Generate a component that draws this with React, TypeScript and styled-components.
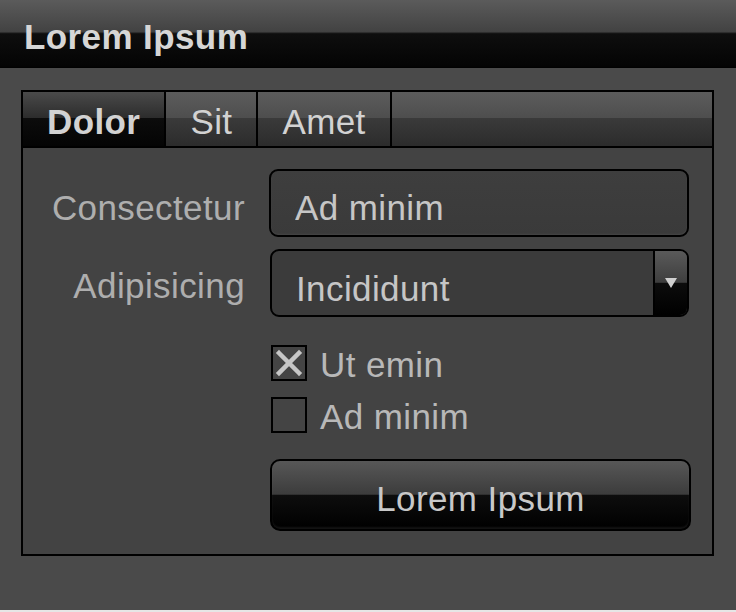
import React, { useState } from 'react'
import styled, { createGlobalStyle } from 'styled-components'

const GlobalStyle = createGlobalStyle`
  html, body {
    margin: 0;
    padding: 0;
    background: #e6e6e6;
  }
  * {
    box-sizing: border-box;
  }
`

const Window = styled.div`
  width: 736px;
  height: 610px;
  background-color: #4a4a4a;
  font-family: 'Liberation Sans', Arial, Helvetica, sans-serif;
  font-size: 35px;
  letter-spacing: 0.4px;
  color: #b4b4b4;
  overflow: hidden;
`

const TitleBar = styled.div`
  height: 68px;
  display: flex;
  align-items: center;
  padding: 5px 0 0 24px;
  background: linear-gradient(
    to bottom,
    #5b5b5b 0px,
    #424242 32px,
    #1a1a1a 33px,
    #0e0e0e 34px,
    #040404 66px,
    #000 68px
  );
`

const Title = styled.h1`
  margin: 0;
  font-size: 35px;
  font-weight: 700;
  color: #d6d6d6;
  line-height: 1;
`

const Body = styled.div`
  padding: 22px 22px 0 21px;
`

const TabPanel = styled.div`
  border: 2px solid #000;
  background-color: #434343;
`

const TabBar = styled.div`
  display: flex;
  height: 56px;
  border-bottom: 2px solid #000;
`

const Tab = styled.button<{ $active?: boolean }>`
  height: 100%;
  margin: 0;
  padding: 5px 24px 0;
  border: none;
  border-right: 2px solid #000;
  font-family: inherit;
  font-size: 35px;
  letter-spacing: 0.4px;
  font-weight: ${({ $active }) => ($active ? 700 : 400)};
  color: #d2d2d2;
  cursor: pointer;
  background: ${({ $active }) =>
    $active
      ? 'linear-gradient(to bottom, #4a4a4a 0%, #2c2c2c 48%, #0c0c0c 49%, #040404 100%)'
      : 'linear-gradient(to bottom, #5c5c5c 0%, #4e4e4e 48%, #3a3a3a 49%, #2c2c2c 100%)'};
`

const TabFiller = styled.div`
  flex: 1;
  background: linear-gradient(to bottom, #5c5c5c 0%, #4e4e4e 48%, #3a3a3a 49%, #2c2c2c 100%);
`

const Form = styled.div`
  display: grid;
  grid-template-columns: 222px 420px;
  column-gap: 24px;
  padding: 21px 0 23px;
`

const Label = styled.label<{ $mt?: number; $pt?: number }>`
  grid-column: 1;
  justify-self: end;
  align-self: center;
  margin-top: ${({ $mt }) => $mt || 0}px;
  padding-top: ${({ $pt }) => $pt || 0}px;
  color: #aeaeae;
`

const Field = styled.div<{ $mt?: number }>`
  grid-column: 2;
  margin-top: ${({ $mt }) => $mt || 0}px;
`

const TextInput = styled.input`
  display: block;
  width: 100%;
  height: 68px;
  padding: 10px 24px 0;
  border: 2px solid #000;
  border-radius: 9px;
  background: linear-gradient(to bottom, #3e3e3e, #3a3a3a);
  box-shadow: inset 0 -1px 2px rgba(255, 255, 255, 0.06);
  font-family: inherit;
  font-size: 35px;
  letter-spacing: 0.4px;
  color: #c6c6c6;
  outline: none;
`

const SelectBox = styled.div`
  display: flex;
  height: 68px;
  margin-left: 1px;
  border: 2px solid #000;
  border-radius: 9px;
  overflow: hidden;
  background: #3b3b3b;
`

const SelectValue = styled.div`
  flex: 1;
  display: flex;
  align-items: center;
  padding: 12px 24px 0;
  color: #c6c6c6;
`

const SelectArrow = styled.div`
  width: 34px;
  display: flex;
  align-items: center;
  justify-content: center;
  border-left: 2px solid #000;
  background: linear-gradient(to bottom, #5a5a5a 0%, #3e3e3e 49%, #0c0c0c 50%, #000 100%);
`

const CheckRow = styled.label`
  display: flex;
  align-items: center;
  gap: 13px;
  margin-left: 2px;
  height: 36px;
  cursor: pointer;
  color: #b8b8b8;
`

const CheckText = styled.span`
  padding-top: 3px;
`

const CheckBox = styled.span`
  width: 36px;
  height: 36px;
  display: flex;
  align-items: center;
  justify-content: center;
  border: 2px solid #000;
  background: #444;
`

const ActionButton = styled.button`
  display: block;
  width: 421px;
  height: 72px;
  margin-left: 1px;
  padding-top: 8px;
  border: 2px solid #000;
  border-radius: 10px;
  background: linear-gradient(to bottom, #575757 0%, #3c3c3c 49%, #0d0d0d 50%, #000 100%);
  box-shadow: inset 0 -2px 2px rgba(255, 255, 255, 0.08);
  font-family: inherit;
  font-size: 35px;
  letter-spacing: 0.4px;
  color: #c8c8c8;
  cursor: pointer;
`

const tabs = ['Dolor', 'Sit', 'Amet']

const Cross = () => (
  <svg width="28" height="28" viewBox="0 0 28 28">
    <path d="M4 4 L24 24 M24 4 L4 24" stroke="#c6c6c6" strokeWidth="4.5" strokeLinecap="square" />
  </svg>
)

const Arrow = () => (
  <svg width="12" height="10" viewBox="0 0 12 10">
    <path d="M0 0 H12 L6 10 Z" fill="#d0d0d0" />
  </svg>
)

const App = () => {
  const [active, setActive] = useState(0)
  const [checks, setChecks] = useState([true, false])

  const toggle = (i: number) => setChecks((c) => c.map((v, j) => (j === i ? !v : v)))

  return (
    <Window>
      <GlobalStyle />
      <TitleBar>
        <Title>Lorem Ipsum</Title>
      </TitleBar>
      <Body>
        <TabPanel>
          <TabBar>
            {tabs.map((t, i) => (
              <Tab key={t} $active={i === active} onClick={() => setActive(i)}>
                {t}
              </Tab>
            ))}
            <TabFiller />
          </TabBar>
          <Form>
            <Label $pt={10}>Consectetur</Label>
            <Field>
              <TextInput defaultValue="Ad minim" />
            </Field>
            <Label $mt={12} $pt={6}>
              Adipisicing
            </Label>
            <Field $mt={12}>
              <SelectBox>
                <SelectValue>Incididunt</SelectValue>
                <SelectArrow>
                  <Arrow />
                </SelectArrow>
              </SelectBox>
            </Field>
            <Field $mt={28}>
              <CheckRow onClick={() => toggle(0)}>
                <CheckBox>{checks[0] && <Cross />}</CheckBox>
                <CheckText>Ut emin</CheckText>
              </CheckRow>
            </Field>
            <Field $mt={16}>
              <CheckRow onClick={() => toggle(1)}>
                <CheckBox>{checks[1] && <Cross />}</CheckBox>
                <CheckText>Ad minim</CheckText>
              </CheckRow>
            </Field>
            <Field $mt={26}>
              <ActionButton>Lorem Ipsum</ActionButton>
            </Field>
          </Form>
        </TabPanel>
      </Body>
    </Window>
  )
}

export default App
